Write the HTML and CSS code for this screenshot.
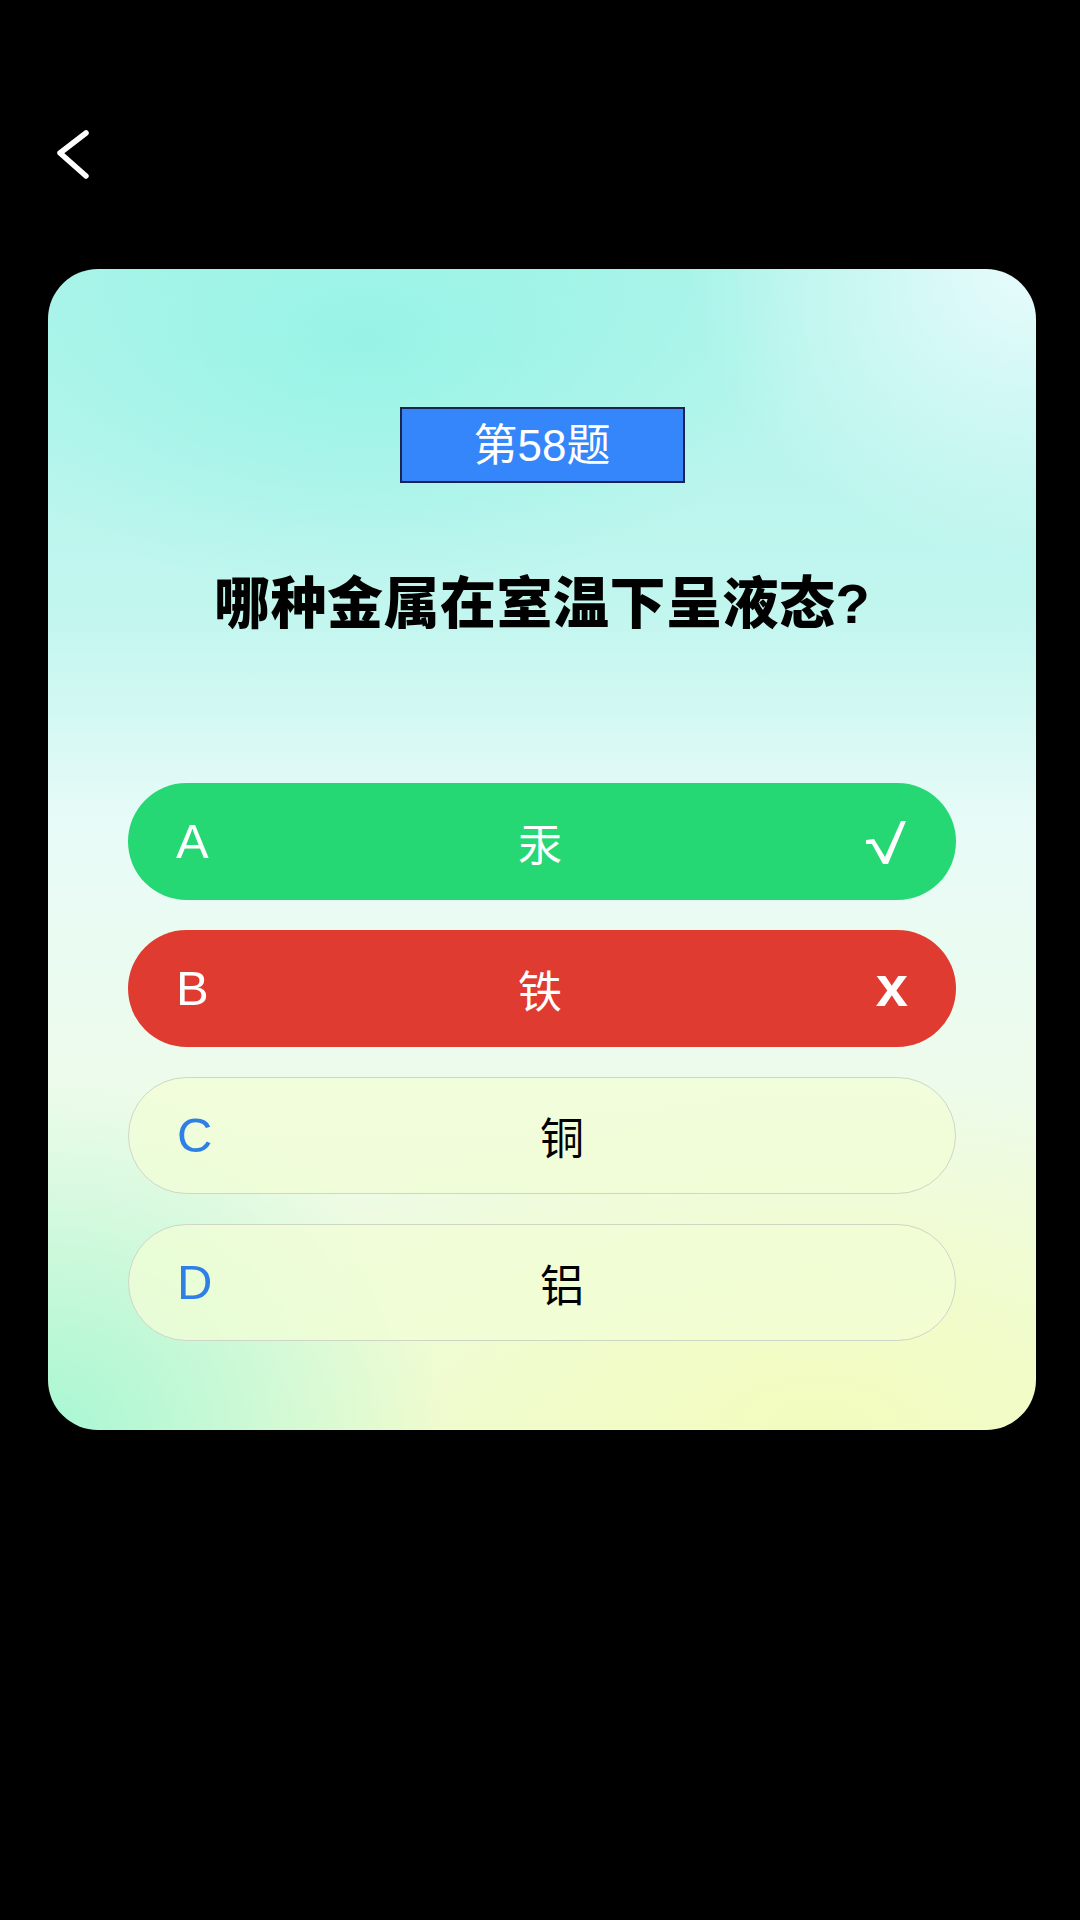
FILE: index.html
```html
<!DOCTYPE html>
<html lang="zh-CN">
<head>
<meta charset="utf-8">
<title>答题</title>
<link rel="stylesheet" href="styles.css">
</head>
<body>
<div class="page">
  <header class="topbar">
    <svg class="back" width="40" height="56" viewBox="0 0 40 56">
      <polyline points="32,7 6,27 32,50" fill="none" stroke="#ffffff" stroke-width="5.5" stroke-linecap="round" stroke-linejoin="round"/>
    </svg>
  </header>
  <main class="card">
    <div class="badge">第58题</div>
    <h1 class="question">哪种金属在室温下呈液态?</h1>
    <ul class="options">
      <li class="option correct">
        <span class="letter">A</span><span class="text">汞</span>
        <span class="mark">
          <svg class="check" width="44" height="48" viewBox="0 0 44 48">
            <polygon points="2,22 10,21 21,39 37,3 42,3 24,46 19,46 8,26 2,26" fill="#ffffff"/>
          </svg>
        </span>
      </li>
      <li class="option wrong"><span class="letter">B</span><span class="text">铁</span><span class="mark cross">x</span></li>
      <li class="option plain"><span class="letter">C</span><span class="text">铜</span></li>
      <li class="option plain"><span class="letter">D</span><span class="text">铝</span></li>
    </ul>
  </main>
</div>
</body>
</html>
```
FILE: styles.css
```css
html, body {
  margin: 0;
  padding: 0;
  background: #000000;
}
body {
  width: 1080px;
  height: 1920px;
  font-family: "Noto Sans CJK SC", "Noto Sans", sans-serif;
}
.page {
  display: flex;
  flex-direction: column;
}
.topbar {
  height: 269px;
  box-sizing: border-box;
  padding: 126px 0 0 54px;
}
.back {
  display: block;
}
.card {
  margin: 0 44px 0 48px;
  box-sizing: border-box;
  height: 1161px;
  border-radius: 50px;
  padding: 138px 80px 90px;
  display: flex;
  flex-direction: column;
  align-items: center;
  background:
    radial-gradient(ellipse 45% 22% at 32% 6%, rgba(150, 243, 230, 0.95) 0%, rgba(150, 243, 230, 0) 100%),
    radial-gradient(ellipse 40% 30% at 0% 100%, rgba(168, 247, 212, 1) 0%, rgba(168, 247, 212, 0) 100%),
    radial-gradient(ellipse 60% 30% at 78% 100%, rgba(243, 252, 190, 1) 0%, rgba(243, 252, 190, 0) 100%),
    radial-gradient(ellipse 35% 25% at 100% 0%, rgba(232, 251, 252, 1) 0%, rgba(232, 251, 252, 0) 100%),
    linear-gradient(180deg, #aef4ea 0%, #c2f6ef 30%, #e8fbf8 48%, #eefbe8 75%, #eefbd6 100%);
}
.badge {
  width: 285px;
  height: 76px;
  box-sizing: border-box;
  border: 2px solid #1b2350;
  background: #3486fa;
  color: #ffffff;
  font-family: "Liberation Sans", "Noto Sans CJK SC", sans-serif;
  font-size: 44px;
  line-height: 74px;
  text-align: center;
}
.question {
  margin: 87px 0 0;
  font-family: "Liberation Sans", "Noto Sans CJK SC", sans-serif;
  font-size: 56px;
  line-height: 67px;
  font-weight: 900;
  letter-spacing: 0.5px;
  color: #000000;
  text-align: center;
  white-space: nowrap;
}
.options {
  list-style: none;
  margin: 146px 0 0;
  padding: 0;
  width: 100%;
  display: flex;
  flex-direction: column;
  gap: 30px;
}
.option {
  height: 117px;
  box-sizing: border-box;
  border-radius: 59px;
  padding: 0 48px;
  display: flex;
  align-items: center;
}
.correct {
  background: #25d873;
}
.wrong {
  background: #e03b30;
}
.plain {
  background: rgba(242, 253, 214, 0.75);
  border: 1px solid #cfd6c6;
}
.letter {
  width: 40px;
  font-family: "Liberation Sans", Arial, sans-serif;
  font-size: 49px;
  line-height: 1;
}
.correct .letter, .wrong .letter {
  color: #ffffff;
}
.plain .letter {
  color: #2f80e6;
}
.text {
  flex: 1;
  text-align: center;
  font-size: 44px;
  line-height: 1;
}
.correct .text, .wrong .text {
  color: #ffffff;
}
.plain .text {
  color: #000000;
}
.mark {
  width: 44px;
  display: flex;
  justify-content: flex-end;
  color: #ffffff;
  font-family: "Liberation Sans", Arial, sans-serif;
  line-height: 1;
}
.check {
  display: block;
}
.cross {
  font-size: 58px;
  font-weight: 700;
  margin-top: -6px;
}
```
